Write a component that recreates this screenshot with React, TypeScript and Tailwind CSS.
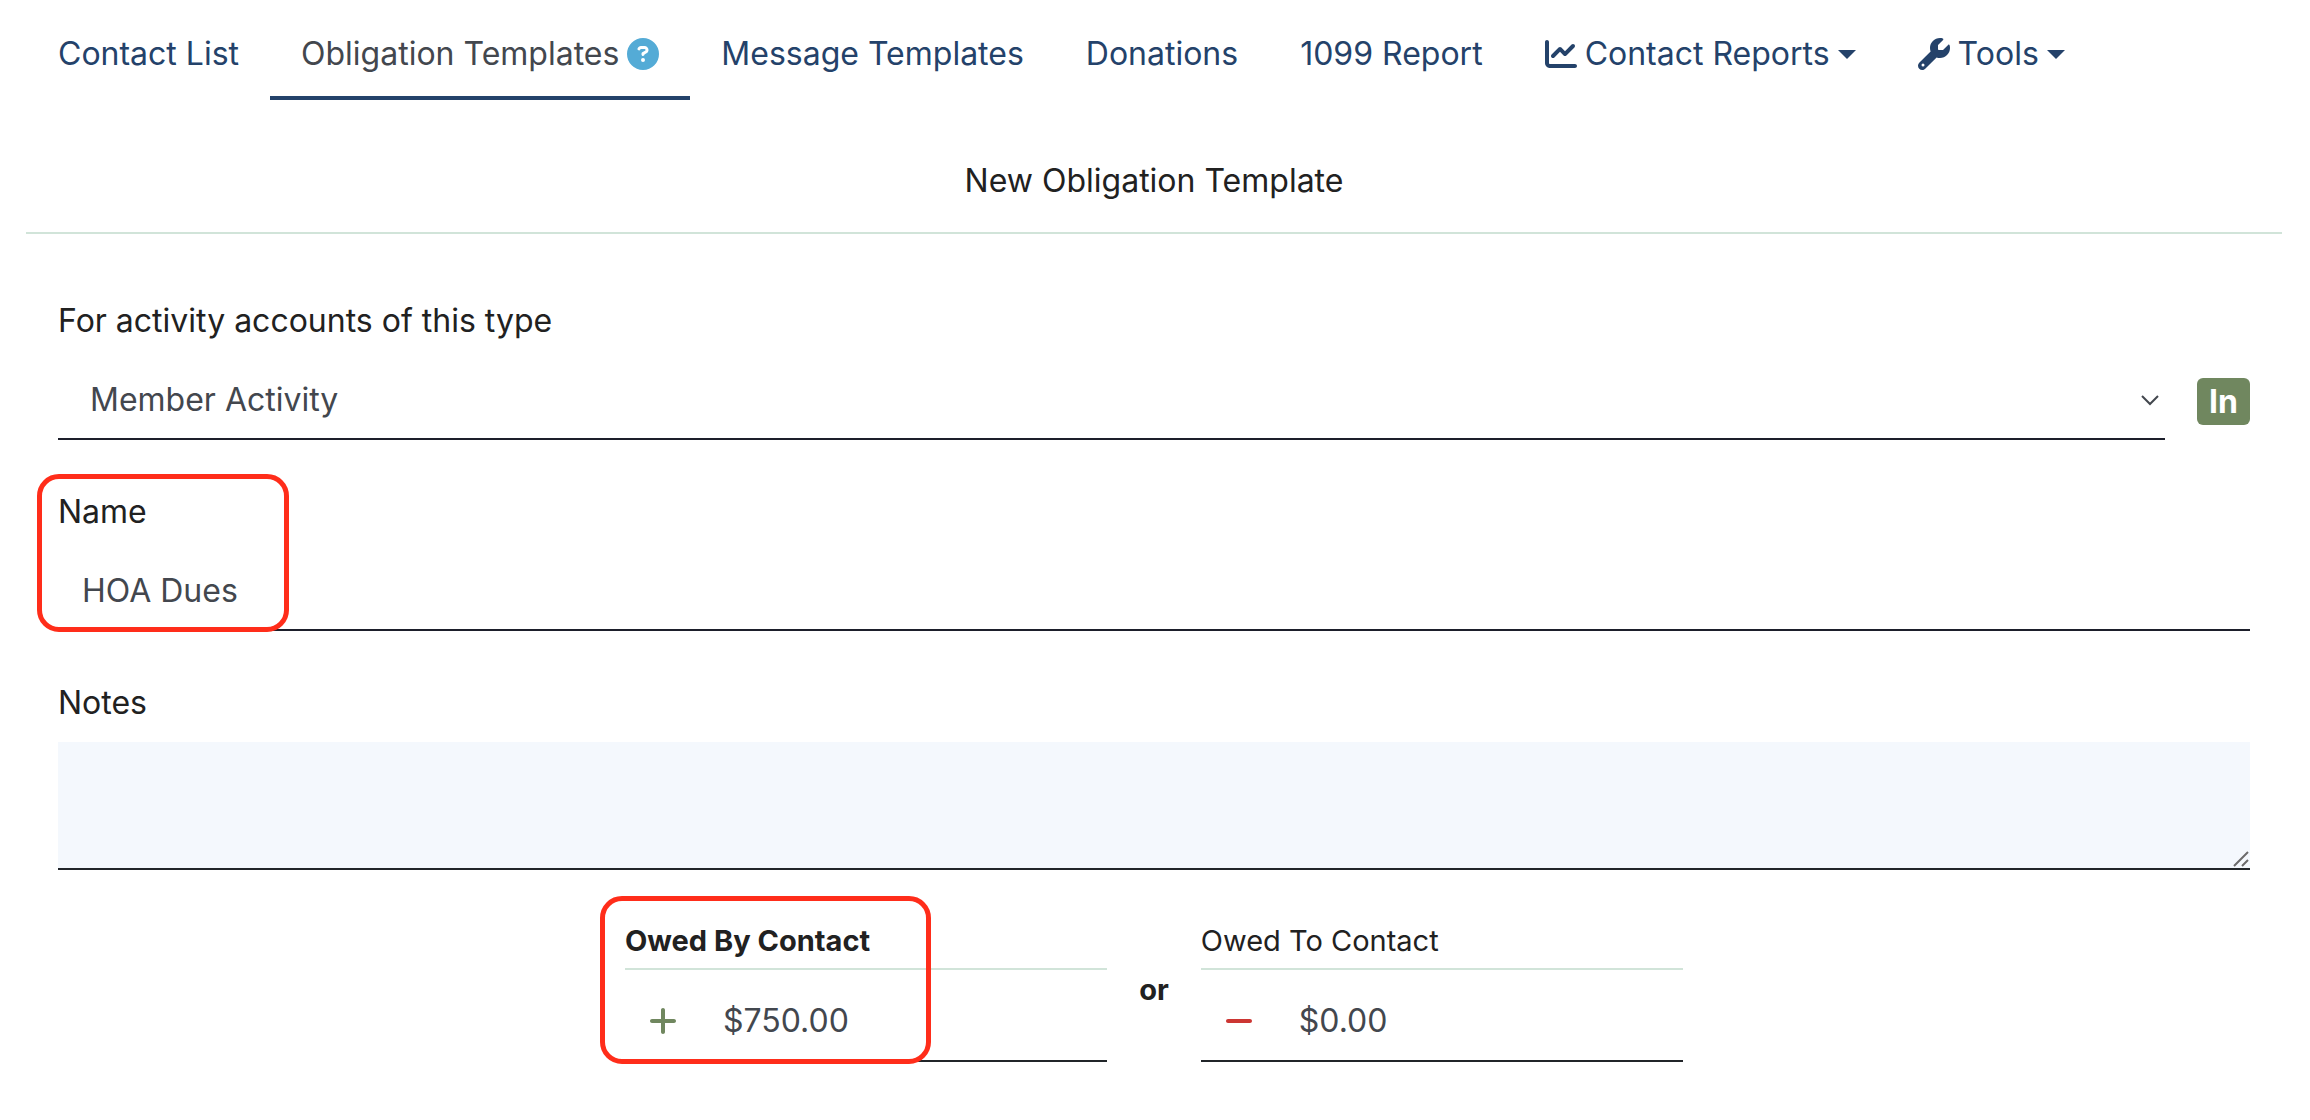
import clsx from 'clsx';
import type { ReactNode } from 'react';
import { FaChartLine, FaCircleQuestion, FaMinus, FaPlus, FaWrench } from 'react-icons/fa6';

interface NavItem {
  label: string;
  icon?: ReactNode;
  active?: boolean;
  help?: boolean;
  menu?: boolean;
}

const NAV_ITEMS: NavItem[] = [
  { label: 'Contact List' },
  { label: 'Obligation Templates', active: true, help: true },
  { label: 'Message Templates' },
  { label: 'Donations' },
  { label: '1099 Report' },
  { label: 'Contact Reports', icon: <FaChartLine size={32} />, menu: true },
  { label: 'Tools', icon: <FaWrench size={32} />, menu: true },
];

function Caret() {
  return (
    <svg width="18" height="9" viewBox="0 0 18 9" fill="currentColor" aria-hidden="true">
      <path d="M0 0h18L9 9z" />
    </svg>
  );
}

function NavBar() {
  return (
    <nav className="flex pt-[14px] pl-px">
      {NAV_ITEMS.map(item => {
        const cls = clsx(
          'flex items-center gap-2 border-b-4 px-[31px] pt-4 pb-[18px] leading-[48px] whitespace-nowrap',
          item.active ? 'border-[#24426a] text-[#43474e]' : 'border-transparent text-[#24426a]',
        );
        return item.menu ? (
          <button key={item.label} type="button" className={cls}>
            {item.icon}
            {item.label}
            <Caret />
          </button>
        ) : (
          <a key={item.label} href="#" className={cls}>
            {item.label}
            {item.help && <FaCircleQuestion size={32} className="text-[#54abd6]" />}
          </a>
        );
      })}
    </nav>
  );
}

// Red outline that points the reader at a field
function Highlight({ className }: { className: string }) {
  return (
    <div className={clsx('pointer-events-none absolute rounded-[22px] border-[5px] border-[#ff2d1a]', className)} />
  );
}

interface AmountFieldProps {
  id: string;
  label: string;
  value: string;
  icon: ReactNode;
  bold?: boolean;
  highlighted?: boolean;
}

function AmountField({ id, label, value, icon, bold, highlighted }: AmountFieldProps) {
  return (
    <div className="relative w-[22%]">
      <label
        htmlFor={id}
        className={clsx('block border-b-2 border-[#d1e4d9] pb-[7px] text-[29px] leading-[40px]', bold && 'font-bold')}
      >
        {label}
      </label>
      <div className="mt-3 flex h-20 items-center border-b-2 border-[#212529] pl-[22px]">
        {icon}
        <input id={id} defaultValue={value} className="ml-11 min-w-0 flex-1 text-[#43474e] outline-none" />
      </div>
      {highlighted && <Highlight className="-top-[25px] -left-[25px] h-[168px] w-[331px]" />}
    </div>
  );
}

export default function App() {
  return (
    <div className="min-h-screen bg-white pr-7 pl-[26px] font-['Inter',sans-serif] text-[32px] leading-[48px] text-[#212121]">
      <NavBar />

      <h1 className="border-b-2 border-[#d1e4d9] pt-[57px] pb-[27px] text-center">New Obligation Template</h1>

      <form className="px-8 pt-[63px]">
        <label htmlFor="account-type" className="block">For activity accounts of this type</label>
        <div className="mt-[15px] flex items-center gap-8">
          <div className="relative flex-1">
            <select
              id="account-type"
              className="block h-20 w-full appearance-none border-b-2 border-[#1d1f2b] pt-0.5 pr-16 pl-8 text-[#43474e] outline-none"
            >
              <option>Member Activity</option>
            </select>
            <svg
              className="pointer-events-none absolute top-[34px] right-[6px]"
              width="18" height="12" viewBox="0 0 18 12" fill="none" stroke="#43474e" strokeWidth="2"
            >
              <path d="M1 2l8 8 8-8" />
            </svg>
          </div>
          <button type="button" className="mt-0.5 h-[47px] w-[53px] rounded-[6px] bg-[#70875f] leading-[47px] font-bold text-white">
            In
          </button>
        </div>

        <div className="relative mt-12">
          <label htmlFor="name" className="block">Name</label>
          <input
            id="name"
            defaultValue="HOA Dues"
            className="mt-[15px] block h-20 w-full border-b-2 border-[#1d1f2b] px-6 text-[#43474e] outline-none"
          />
          <Highlight className="-top-[14px] -left-[21px] h-[158px] w-[252px]" />
        </div>

        <div className="mt-12">
          <label htmlFor="notes" className="block">Notes</label>
          <div className="relative mt-[15px]">
            <textarea
              id="notes"
              className="block h-32 w-full resize-none border-b-2 border-[#212529] bg-[#f4f8fd] px-6 py-4 outline-none"
            />
            <svg
              className="pointer-events-none absolute right-[1px] bottom-[3px]"
              width="16" height="16" viewBox="0 0 16 16" stroke="#6b6b6b" strokeWidth="2"
            >
              <path d="M1 15L15 1M9 15l6-6" />
            </svg>
          </div>
        </div>

        <div className="flex items-center justify-center pt-[51px] pb-14">
          <AmountField
            id="owed-by"
            label="Owed By Contact"
            value="$750.00"
            icon={<FaPlus size={32} className="text-[#70875f]" />}
            bold
            highlighted
          />
          <span className="px-8 pb-1 text-[29px] font-bold">or</span>
          <AmountField
            id="owed-to"
            label="Owed To Contact"
            value="$0.00"
            icon={<FaMinus size={32} className="text-[#cc3633]" />}
          />
        </div>
      </form>
    </div>
  );
}
